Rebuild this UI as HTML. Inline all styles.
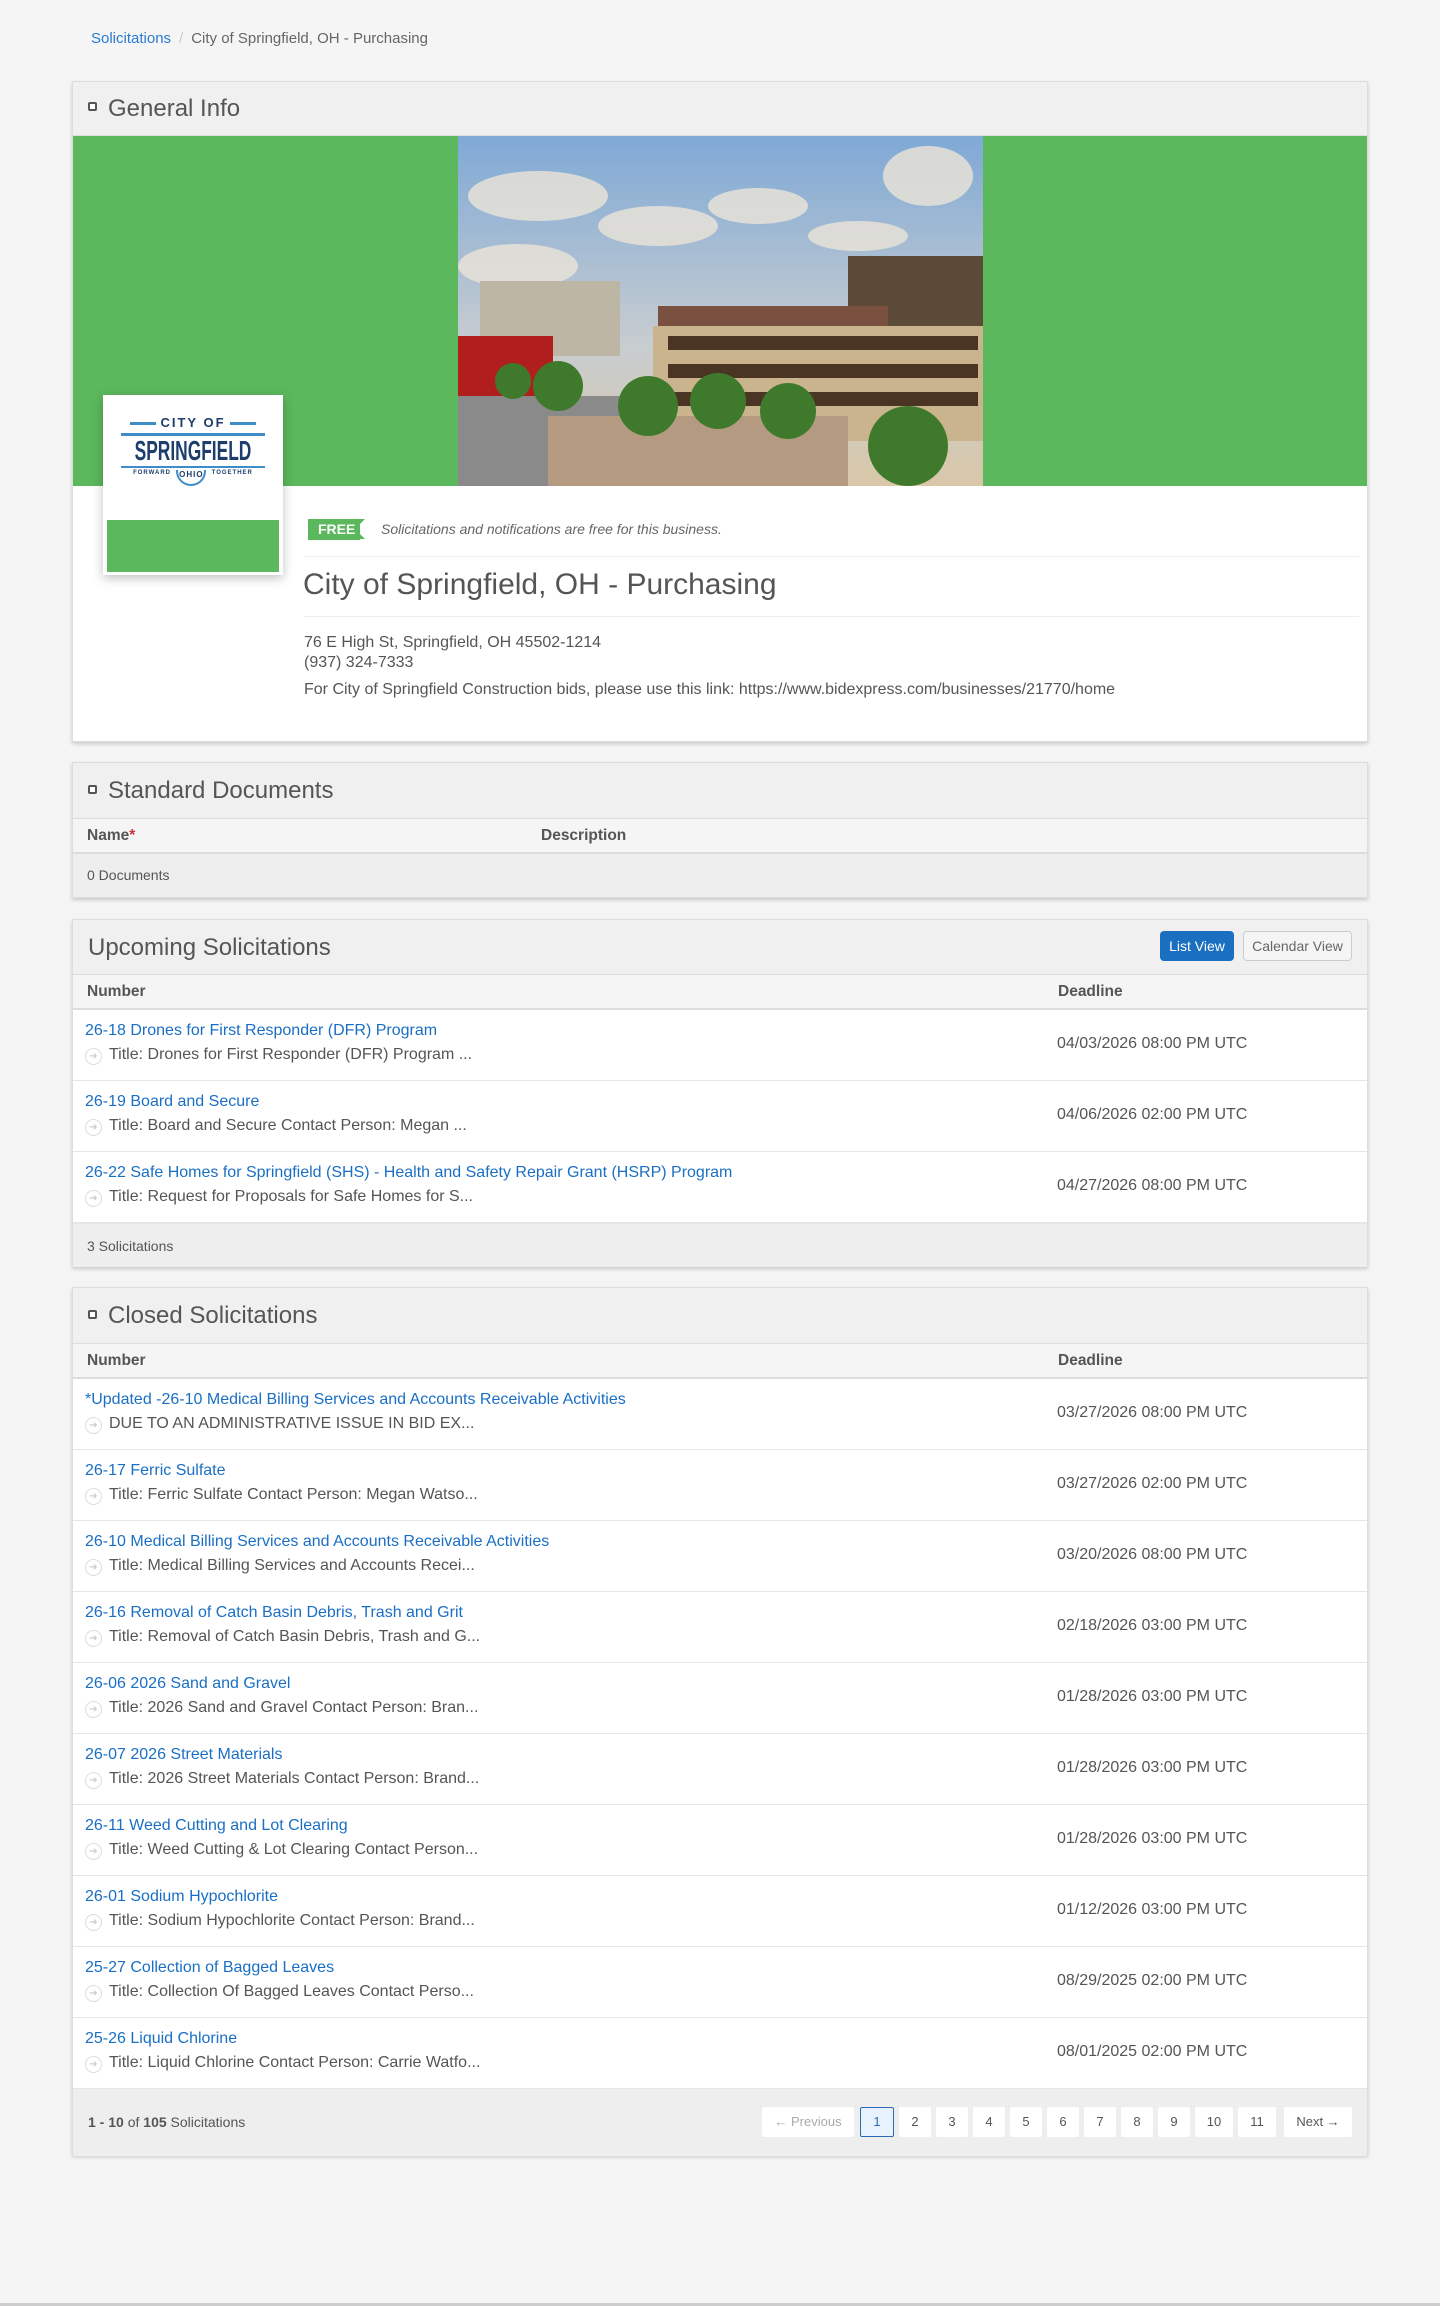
<!DOCTYPE html>
<html><head><meta charset="utf-8">
<style>
*{box-sizing:border-box;margin:0;padding:0}
body{width:1440px;height:2306px;background:#f5f5f5;font-family:"Liberation Sans",Arial,sans-serif;color:#555;position:relative;overflow:hidden}
a{color:#1a6fc4;text-decoration:none}
.bc{position:absolute;left:91px;top:30px;font-size:15px;color:#666}
.bc a{color:#2a7bd0}
.bc .sep{color:#ccc;margin:0 8px}
.panel{position:absolute;left:72px;width:1296px;background:#fff;border:1px solid #ddd;box-shadow:0 2px 4px rgba(0,0,0,.18)}
.ph{background:#f0f0f0;border-bottom:1px solid #ddd;position:relative;font-size:24px;color:#555}
.ph .t{position:absolute;left:35px}
.ph .t.nb{left:15px}
.ph .ic{position:absolute;left:15px;width:9px;height:9px;border:2px solid #555;border-radius:2px;background:#fff}
.ch{background:#f5f5f5;border-bottom:2px solid #ddd;position:relative;font-weight:bold;font-size:15.5px;color:#555}
.ch span{position:absolute;top:50%;transform:translateY(-50%)}
.row{height:71px;border-bottom:1px solid #e6e6e6;position:relative;background:#fff}
.row .l{position:absolute;left:12px;top:12px;font-size:16px}
.row .d{position:absolute;left:36px;top:36px;font-size:16px;color:#555;white-space:nowrap}
.row .c{position:absolute;left:12px;top:38px;width:17px;height:17px;border:1px solid #ddd;border-radius:50%;color:#ccc;font-size:10px;text-align:center;line-height:15px}
.row .dl{position:absolute;left:984px;top:25px;font-size:16px;color:#555}
.ft{background:#eee;position:relative;font-size:14px;color:#555}
.pg{position:absolute;top:18px;height:30px;background:#fff;font-size:13px;color:#555;text-align:center;line-height:30px;border-radius:2px}
</style></head><body>
<div class="bc"><a>Solicitations</a><span class="sep">/</span>City of Springfield, OH - Purchasing</div>

<div class="panel" style="top:81px;height:661px">
 <div class="ph" style="height:54px"><div class="ic" style="top:20px"></div><div class="t" style="top:13px">General Info</div></div>
 <div style="position:absolute;left:0;top:54px;width:1294px;height:350px;background:#5cb85c"></div>
 <svg style="position:absolute;left:385px;top:54px" width="525" height="350" viewBox="0 0 525 350">
  <defs><linearGradient id="sky" x1="0" y1="0" x2="0" y2="1"><stop offset="0" stop-color="#7fa9d6"/><stop offset=".6" stop-color="#c8cdd0"/><stop offset="1" stop-color="#d9c7a8"/></linearGradient></defs>
  <rect width="525" height="350" fill="url(#sky)"/>
  <g fill="#e7e2d8" opacity=".85"><ellipse cx="80" cy="60" rx="70" ry="25"/><ellipse cx="200" cy="90" rx="60" ry="20"/><ellipse cx="300" cy="70" rx="50" ry="18"/><ellipse cx="470" cy="40" rx="45" ry="30"/><ellipse cx="60" cy="130" rx="60" ry="22"/><ellipse cx="400" cy="100" rx="50" ry="15"/></g>
  <rect x="22" y="145" width="140" height="75" fill="#bdb6a5"/>
  <rect x="390" y="120" width="135" height="105" fill="#5b4a38"/>
  <rect x="0" y="200" width="95" height="60" fill="#b01e1e"/>
  <rect x="200" y="170" width="230" height="22" fill="#7a5040"/>
  <rect x="195" y="190" width="330" height="115" fill="#c9b48e"/>
  <g fill="#4a3524"><rect x="210" y="200" width="310" height="14"/><rect x="210" y="228" width="310" height="14"/><rect x="210" y="256" width="310" height="14"/></g>
  <rect x="0" y="260" width="200" height="90" fill="#8a8a8a"/>
  <rect x="90" y="280" width="300" height="70" fill="#b49a80"/>
  <g fill="#3f7a2c"><circle cx="100" cy="250" r="25"/><circle cx="190" cy="270" r="30"/><circle cx="260" cy="265" r="28"/><circle cx="330" cy="275" r="28"/><circle cx="450" cy="310" r="40"/><circle cx="55" cy="245" r="18"/></g>
 </svg>
 <div style="position:absolute;left:30px;top:313px;width:180px;height:180px;background:#fff;box-shadow:0 3px 10px rgba(0,0,0,.25)">
  <div style="position:absolute;left:0;top:8px;width:180px;text-align:center;color:#1d3d6b;font-weight:bold">
   <div style="font-size:13px;letter-spacing:2px;margin-top:12px"><span style="display:inline-block;width:26px;height:3px;background:#3e8cc8;vertical-align:middle;margin-right:4px"></span>CITY OF<span style="display:inline-block;width:26px;height:3px;background:#3e8cc8;vertical-align:middle;margin-left:4px"></span></div>
   <div style="height:3px;background:#3e8cc8;margin:3px 18px 0"></div>
   <div style="font-size:28px;line-height:30px;transform:scaleX(.62);white-space:nowrap;margin:0 -40px">SPRINGFIELD</div>
   <div style="height:2px;background:#3e8cc8;margin:0 18px"></div>
   <div style="font-size:6px;letter-spacing:1px;margin-top:2px">FORWARD &nbsp;<span style="display:inline-block;width:30px;height:16px;border:2px solid #3e8cc8;border-top:none;border-radius:0 0 15px 15px;font-size:8px;vertical-align:top">OHIO</span>&nbsp; TOGETHER</div>
  </div>
  <div style="position:absolute;left:4px;top:125px;width:172px;height:52px;background:#5cb85c"></div>
 </div>
 <div style="position:absolute;left:235px;top:437px;width:52px;height:21px;background:#5cb85c;color:#fff;font-weight:bold;font-size:14px;line-height:21px;padding-left:10px">FREE</div>
 <div style="position:absolute;left:282px;top:437px;width:0;height:0;border-top:10.5px solid #5cb85c;border-bottom:10.5px solid #5cb85c;border-right:10px solid transparent"></div>
 <div style="position:absolute;left:308px;top:439px;font-size:14px;font-style:italic;color:#666">Solicitations and notifications are free for this business.</div>
 <div style="position:absolute;left:231px;top:474px;width:1055px;border-top:1px solid #eee"></div>
 <div style="position:absolute;left:230px;top:486px;font-size:30px;color:#555">City of Springfield, OH - Purchasing</div>
 <div style="position:absolute;left:231px;top:534px;width:1055px;border-top:1px solid #eee"></div>
 <div style="position:absolute;left:231px;top:551px;font-size:16px;line-height:20px;color:#555">76 E High St, Springfield, OH 45502-1214<br>(937) 324-7333</div>
 <div style="position:absolute;left:231px;top:599px;font-size:16px;color:#555">For City of Springfield Construction bids, please use this link: https://www.bidexpress.com/businesses/21770/home</div>
</div>

<div class="panel" style="top:762px;height:136px">
 <div class="ph" style="height:56px"><div class="ic" style="top:22px"></div><div class="t" style="top:14px">Standard Documents</div></div>
 <div class="ch" style="height:35px"><span style="left:14px">Name<span style="position:static;color:#c33;transform:none">*</span></span><span style="left:468px">Description</span></div>
 <div class="ft" style="height:43px"><span style="position:absolute;left:14px;top:13px;font-size:14px">0 Documents</span></div>
</div>

<div class="panel" style="top:919px;height:348px">
 <div class="ph" style="height:55px"><div class="t nb" style="top:14px">Upcoming Solicitations</div>
  <div style="position:absolute;left:1087px;top:11px;width:74px;height:30px;background:#1a6fc0;color:#fff;border-radius:4px;font-size:14px;text-align:center;line-height:30px">List View</div>
  <div style="position:absolute;left:1170px;top:11px;width:109px;height:30px;background:#f5f5f5;color:#666;border:1px solid #ccc;border-radius:4px;font-size:14px;text-align:center;line-height:28px">Calendar View</div>
 </div>
 <div class="ch" style="height:35px"><span style="left:14px">Number</span><span style="left:985px">Deadline</span></div>
 <div class="row"><a class="l">26-18 Drones for First Responder (DFR) Program</a><div class="c">➔</div><div class="d">Title: Drones for First Responder (DFR) Program ...</div><div class="dl">04/03/2026 08:00 PM UTC</div></div>
 <div class="row"><a class="l">26-19 Board and Secure</a><div class="c">➔</div><div class="d">Title: Board and Secure Contact Person: Megan ...</div><div class="dl">04/06/2026 02:00 PM UTC</div></div>
 <div class="row"><a class="l">26-22 Safe Homes for Springfield (SHS) - Health and Safety Repair Grant (HSRP) Program</a><div class="c">➔</div><div class="d">Title: Request for Proposals for Safe Homes for S...</div><div class="dl">04/27/2026 08:00 PM UTC</div></div>
 <div class="ft" style="height:44px;border-top:1px solid #e6e6e6"><span style="position:absolute;left:14px;top:14px;font-size:14px">3 Solicitations</span></div>
</div>

<div class="panel" style="top:1287px;height:868px">
 <div class="ph" style="height:56px"><div class="ic" style="top:22px"></div><div class="t" style="top:14px">Closed Solicitations</div></div>
 <div class="ch" style="height:35px"><span style="left:14px">Number</span><span style="left:985px">Deadline</span></div>
 <div class="row"><a class="l">*Updated -26-10 Medical Billing Services and Accounts Receivable Activities</a><div class="c">➔</div><div class="d">DUE TO AN ADMINISTRATIVE ISSUE IN BID EX...</div><div class="dl">03/27/2026 08:00 PM UTC</div></div>
 <div class="row"><a class="l">26-17 Ferric Sulfate</a><div class="c">➔</div><div class="d">Title: Ferric Sulfate Contact Person: Megan Watso...</div><div class="dl">03/27/2026 02:00 PM UTC</div></div>
 <div class="row"><a class="l">26-10 Medical Billing Services and Accounts Receivable Activities</a><div class="c">➔</div><div class="d">Title: Medical Billing Services and Accounts Recei...</div><div class="dl">03/20/2026 08:00 PM UTC</div></div>
 <div class="row"><a class="l">26-16 Removal of Catch Basin Debris, Trash and Grit</a><div class="c">➔</div><div class="d">Title: Removal of Catch Basin Debris, Trash and G...</div><div class="dl">02/18/2026 03:00 PM UTC</div></div>
 <div class="row"><a class="l">26-06 2026 Sand and Gravel</a><div class="c">➔</div><div class="d">Title: 2026 Sand and Gravel Contact Person: Bran...</div><div class="dl">01/28/2026 03:00 PM UTC</div></div>
 <div class="row"><a class="l">26-07 2026 Street Materials</a><div class="c">➔</div><div class="d">Title: 2026 Street Materials Contact Person: Brand...</div><div class="dl">01/28/2026 03:00 PM UTC</div></div>
 <div class="row"><a class="l">26-11 Weed Cutting and Lot Clearing</a><div class="c">➔</div><div class="d">Title: Weed Cutting &amp; Lot Clearing Contact Person...</div><div class="dl">01/28/2026 03:00 PM UTC</div></div>
 <div class="row"><a class="l">26-01 Sodium Hypochlorite</a><div class="c">➔</div><div class="d">Title: Sodium Hypochlorite Contact Person: Brand...</div><div class="dl">01/12/2026 03:00 PM UTC</div></div>
 <div class="row"><a class="l">25-27 Collection of Bagged Leaves</a><div class="c">➔</div><div class="d">Title: Collection Of Bagged Leaves Contact Perso...</div><div class="dl">08/29/2025 02:00 PM UTC</div></div>
 <div class="row"><a class="l">25-26 Liquid Chlorine</a><div class="c">➔</div><div class="d">Title: Liquid Chlorine Contact Person: Carrie Watfo...</div><div class="dl">08/01/2025 02:00 PM UTC</div></div>
 <div class="ft" style="height:67px">
  <span style="position:absolute;left:15px;top:25px;font-size:14px"><b>1 - 10</b> of <b>105</b> Solicitations</span>
  <div class="pg" style="left:689px;width:92px;color:#aaa">← Previous</div>
  <div class="pg" style="left:787px;width:34px;background:#e8f2fc;border:1px solid #2a6ab8;line-height:28px;color:#2a6ab8">1</div>
  <div class="pg" style="left:826px;width:32px">2</div>
  <div class="pg" style="left:863px;width:32px">3</div>
  <div class="pg" style="left:900px;width:32px">4</div>
  <div class="pg" style="left:937px;width:32px">5</div>
  <div class="pg" style="left:974px;width:32px">6</div>
  <div class="pg" style="left:1011px;width:32px">7</div>
  <div class="pg" style="left:1048px;width:32px">8</div>
  <div class="pg" style="left:1085px;width:32px">9</div>
  <div class="pg" style="left:1122px;width:38px">10</div>
  <div class="pg" style="left:1165px;width:38px">11</div>
  <div class="pg" style="left:1211px;width:68px">Next →</div>
 </div>
</div>
<div style="position:absolute;left:0;top:2303px;width:1440px;height:3px;background:#ccc"></div>
</body></html>
